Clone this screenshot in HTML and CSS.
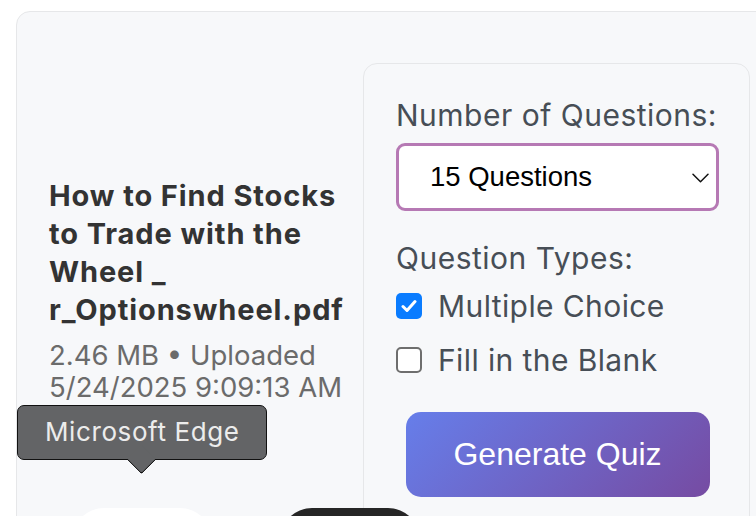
FILE: index.html
```html
<!DOCTYPE html>
<html>
<head>
<meta charset="utf-8">
<link rel="stylesheet" href="styles.css">
</head>
<body>
<div class="card">
  <div class="file-col">
    <h2 class="file-name">How to Find Stocks to Trade with the Wheel _ r_Optionswheel.pdf</h2>
    <p class="file-meta">2.46 MB • Uploaded 5/24/2025 9:09:13 AM</p>
  </div>
  <div class="panel">
    <label class="label">Number of Questions:</label>
    <div class="select">
      <span>15 Questions</span>
      <svg class="chev" width="17" height="10" viewBox="0 0 17 10"><path d="M1 1.2l7.5 7.5 7.5-7.5" fill="none" stroke="#111" stroke-width="1.5" stroke-linecap="round" stroke-linejoin="round"/></svg>
    </div>
    <div class="label types">Question Types:</div>
    <div class="check-list">
      <div class="check-row">
        <span class="box checked"><svg width="16" height="14" viewBox="0 0 16 14"><path d="M2 7.5l4 4 8-9" fill="none" stroke="#fff" stroke-width="3" stroke-linecap="round" stroke-linejoin="round"/></svg></span>
        <span class="check-text">Multiple Choice</span>
      </div>
      <div class="check-row">
        <span class="box"></span>
        <span class="check-text">Fill in the Blank</span>
      </div>
    </div>
    <div class="btn-wrap">
      <button class="generate">Generate Quiz</button>
    </div>
  </div>
</div>
<div class="dock">
  <div class="tooltip">Microsoft Edge</div>
  <div class="dock-icon light"></div>
  <div class="dock-icon dark"></div>
</div>
</body>
</html>
```
FILE: styles.css
```css
html, body {
  margin: 0;
  padding: 0;
  background: #ffffff;
  overflow: hidden;
  width: 756px;
  height: 516px;
}
body {
  position: relative;
  font-family: "Inter", "Noto Sans", sans-serif;
}
.card {
  margin: 11px 0 0 16px;
  width: 780px;
  height: 640px;
  box-sizing: border-box;
  border: 1px solid #e6e7e9;
  border-radius: 14px;
  background: #f7f8fa;
  display: flex;
  align-items: flex-start;
  padding: 51px 0 0 32px;
  gap: 16px;
}
.file-col {
  width: 298px;
  flex: none;
  padding-top: 114px;
}
.file-name {
  margin: 0;
  font-size: 29px;
  line-height: 38px;
  font-weight: 700;
  color: #333333;
  letter-spacing: 0.9px;
}
.file-meta {
  margin: 10px 0 0;
  font-size: 27.5px;
  line-height: 32px;
  color: #6b6b6b;
}
.panel {
  width: 387px;
  height: 600px;
  flex: none;
  box-sizing: border-box;
  border: 1px solid #e6e7e9;
  border-radius: 14px;
  background: #f7f8fa;
  padding: 33px 30px 0 32px;
  display: flex;
  flex-direction: column;
}
.label {
  display: block;
  font-size: 30px;
  line-height: 36px;
  letter-spacing: 0.5px;
  color: #474e56;
}
.select {
  margin-top: 10px;
  height: 68px;
  box-sizing: border-box;
  border: 3px solid #b679b4;
  border-radius: 9px;
  background: #fff;
  display: flex;
  align-items: center;
  justify-content: space-between;
  padding: 0 7px 0 31px;
  font-family: "Liberation Sans", Arial, sans-serif;
  font-size: 27.5px;
  color: #000;
}
.chev { margin-top: 2px; }
.types {
  margin-top: 29px;
}
.check-list {
  margin-top: 3px;
}
.check-row {
  display: flex;
  align-items: center;
  height: 54px;
  gap: 16px;
}
.box {
  width: 22px;
  height: 22px;
  border: 2px solid #6e6e6e;
  border-radius: 5px;
  background: #fff;
  display: flex;
  align-items: center;
  justify-content: center;
}
.box.checked {
  width: 26px;
  height: 26px;
  border: none;
  background: #0a7cff;
}
.check-text {
  font-size: 30px;
  letter-spacing: 0.4px;
  color: #474e56;
}
.btn-wrap {
  display: flex;
  justify-content: center;
  margin-top: 25px;
}
.generate {
  width: 304px;
  height: 85px;
  border: none;
  border-radius: 15px;
  background: linear-gradient(135deg, #667eea 0%, #764ba2 100%);
  color: #fff;
  font-family: "Liberation Sans", Arial, sans-serif;
  font-size: 32px;
}
.dock {
  position: absolute;
  left: 0;
  top: 0;
  width: 756px;
  height: 516px;
  pointer-events: none;
}
.tooltip {
  position: absolute;
  left: 17px;
  top: 405px;
  width: 250px;
  height: 55px;
  box-sizing: border-box;
  border: 1.5px solid #111;
  border-radius: 7px;
  background: #636466;
  color: #ececec;
  font-size: 26px;
  line-height: 52px;
  padding-left: 27px;
  letter-spacing: 0.6px;
}
.tooltip::after {
  content: "";
  position: absolute;
  left: 113px;
  bottom: -11px;
  width: 20px;
  height: 20px;
  background: #636466;
  border-right: 1.5px solid #111;
  border-bottom: 1.5px solid #111;
  border-bottom-right-radius: 3px;
  transform: rotate(45deg);
}
.dock-icon {
  position: absolute;
  top: 508px;
  width: 140px;
  height: 140px;
  border-radius: 32px;
}
.dock-icon.light {
  left: 72px;
  background: #ffffff;
}
.dock-icon.dark {
  left: 280px;
  background: #262626;
}
```
